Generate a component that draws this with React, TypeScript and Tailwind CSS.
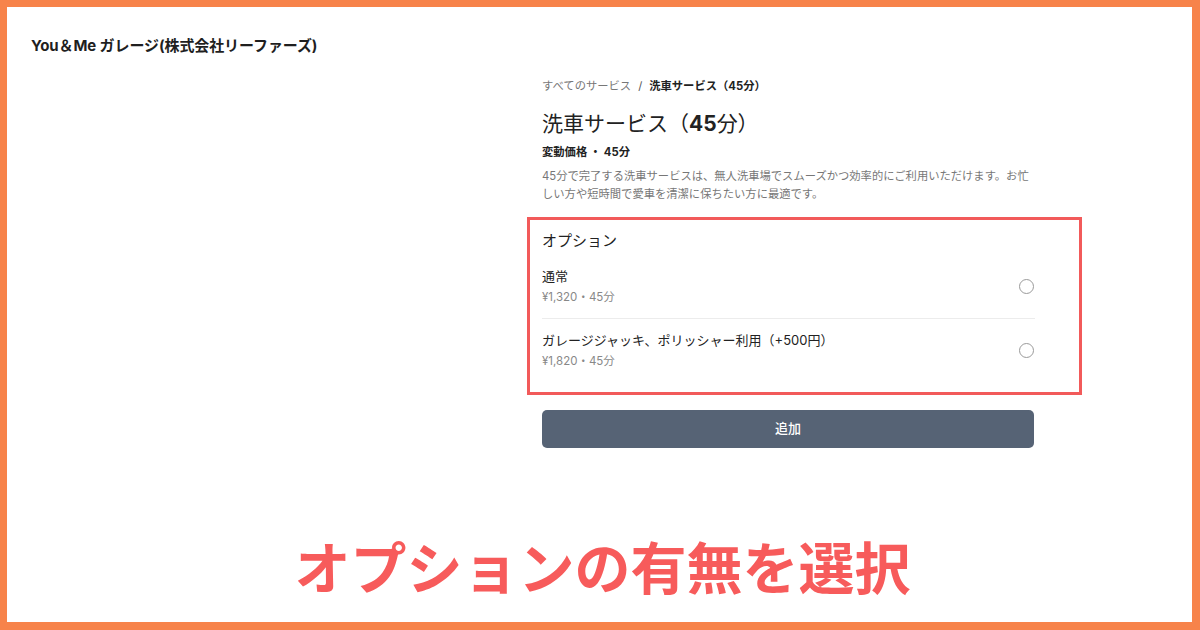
const options = [
  { id: 'normal', name: '通常', price: '¥1,320・45分' },
  { id: 'jack', name: 'ガレージジャッキ、ポリッシャー利用（+500円）', price: '¥1,820・45分' },
];

export default function App() {
  return (
    <div className="w-[1200px] h-[630px] overflow-hidden bg-white border-t-[7px] border-l-[7px] border-r-[8px] border-b-[8px] border-[#f7834a] font-['Inter','Noto_Sans_CJK_JP',sans-serif] text-[#1f1f1f]">
      <header className="pt-[28px] pl-[24px]">
        <p className="text-[15px] leading-[22px] font-bold tracking-[-0.1px]">You＆Me ガレージ(株式会社リーファーズ)</p>
      </header>

      <main className="ml-[535px] w-[492px]">
        <nav className="mt-[21px] flex items-center gap-[7px] text-[11.3px] leading-[16px]">
          <span className="text-[#777]">すべてのサービス</span>
          <span className="text-[#555]">/</span>
          <span className="font-bold text-[#222]">洗車サービス（45分）</span>
        </nav>

        <h1 className="mt-[15px] text-[21px] leading-[30px] font-normal text-[#222]">
          洗車サービス（<span className="font-bold">45</span>分）
        </h1>
        <p className="mt-[5px] text-[11.3px] leading-[16px] font-bold text-[#222]">変動価格 ・ 45分</p>
        <p className="mt-[7px] text-[11.3px] leading-[18px] text-[#777]">
          45分で完了する洗車サービスは、無人洗車場でスムーズかつ効率的にご利用いただけます。お忙しい方や短時間で愛車を清潔に保ちたい方に最適です。
        </p>

        <section className="mt-[14px] -ml-[15px] w-[555px] border-[3px] border-[#f25a5a] pl-[12px] pr-[44px] pb-[23px] pt-[10px]">
          <h2 className="text-[15px] leading-[22px] font-normal text-[#222]">オプション</h2>
          <ul className="mt-[2px]">
            {options.map((option, i) => (
              <li
                key={option.id}
                className={`flex items-center justify-between ${
                  i === 0 ? 'pt-[13px] pb-[13px] border-b border-[#ececec]' : 'pt-[12px]'
                }`}
              >
                <div>
                  <p className="text-[13px] leading-[18px] font-normal text-[#222]">{option.name}</p>
                  <p className="mt-[4px] text-[11.5px] leading-[16px] text-[#888]">{option.price}</p>
                </div>
                <span className="mr-[1px] h-[15px] w-[15px] rounded-full border-[1.5px] border-[#9a9a9a]" />
              </li>
            ))}
          </ul>
        </section>

        <button
          type="button"
          className="mt-[15px] h-[38px] w-[492px] rounded-[5px] bg-[#566375] text-[13px] font-medium text-white"
        >
          追加
        </button>
      </main>

      <p className="mt-[89px] pl-[6px] text-center text-[56px] leading-[64px] font-bold text-[#f75b5b]">
        オプションの有無を選択
      </p>
    </div>
  );
}
